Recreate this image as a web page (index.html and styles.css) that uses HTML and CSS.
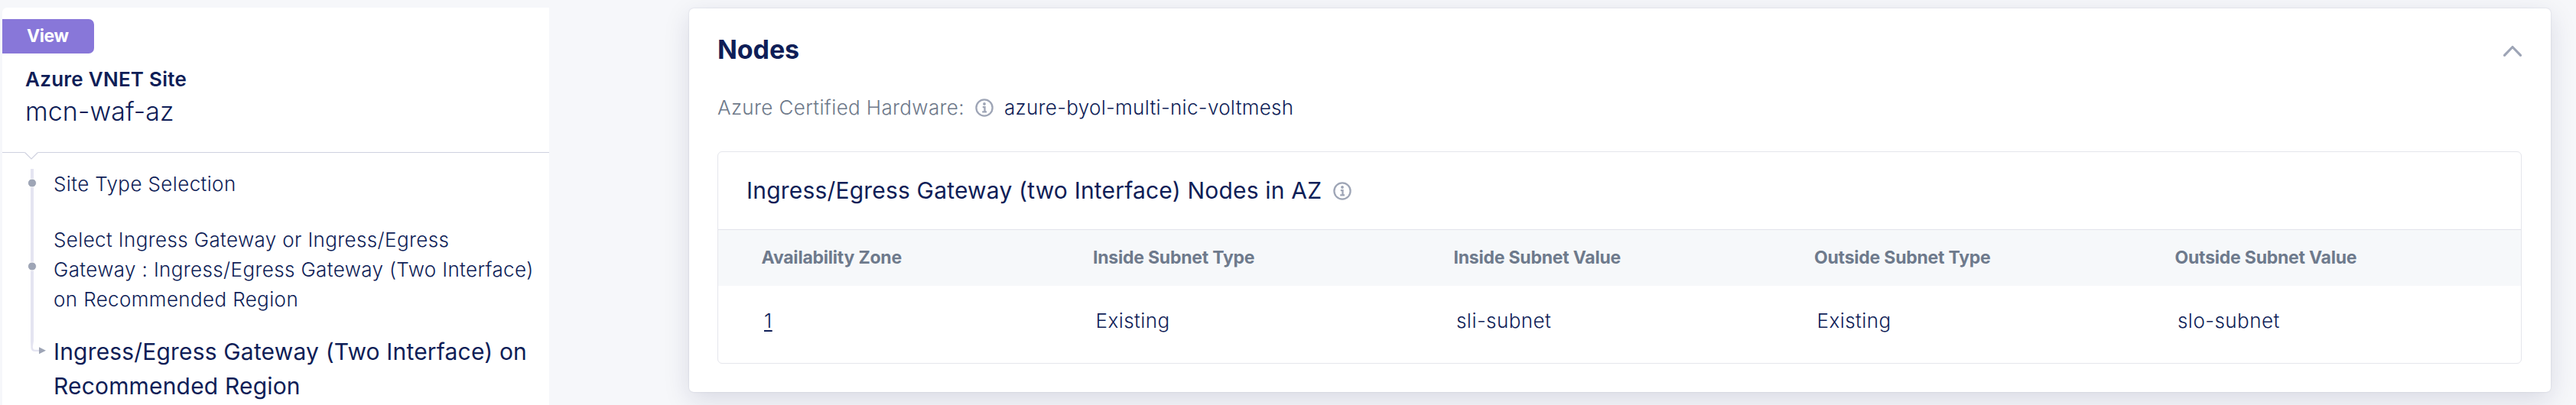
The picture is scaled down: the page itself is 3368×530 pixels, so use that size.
FILE: index.html
```html
<!DOCTYPE html>
<html lang="en">
<head>
<meta charset="utf-8">
<title>Azure VNET Site</title>
<link rel="stylesheet" href="styles.css">
</head>
<body>
<div class="page">
  <aside class="sidebar">
    <header class="site-header">
      <span class="badge">View</span>
      <div class="site-type">Azure VNET Site</div>
      <div class="site-name">mcn-waf-az</div>
      <svg class="notch" width="20" height="12" viewBox="0 0 20 12"><path d="M1 0 L10 9.5 L19 0Z" fill="#fff"/><path d="M1.5 .5 L10 9 L18.5 .5" fill="none" stroke="#cfd1df" stroke-width="1.2"/></svg>
    </header>
    <nav class="steps">
      <svg class="track" width="67" height="250" viewBox="0 0 67 250">
        <path d="M37 0 H41 V225 L39.8 233 Q40 236.6 43 236.8 H49 V239 H43 Q37.6 239 37.4 234 L37 225Z" fill="#e4e4f1"/>
        <circle cx="39" cy="18.5" r="5.5" fill="#9ea5b6" stroke="#fff"/>
        <circle cx="39" cy="127.5" r="5.5" fill="#9ea5b6" stroke="#fff"/>
        <path d="M48 233.3 L57 237.8 L48 242.3Z" fill="#9ea5b6"/>
      </svg>
      <div class="step-list">
        <a class="step">Site Type Selection</a>
        <a class="step">Select Ingress Gateway or Ingress/Egress Gateway : Ingress/Egress Gateway (Two Interface) on Recommended Region</a>
        <a class="step step-current">Ingress/Egress Gateway (Two Interface) on Recommended Region</a>
      </div>
    </nav>
  </aside>

  <main class="card">
    <div class="card-head">
      <h1 class="card-title">Nodes</h1>
      <svg class="chevron" width="26" height="16" viewBox="0 0 26 16"><path d="M2.5 13.3 L13 2.5 L23.5 13.3" fill="none" stroke="#9ea5b6" stroke-width="3.2" stroke-linecap="round" stroke-linejoin="round"/></svg>
    </div>
    <div class="field">
      <span class="field-label">Azure Certified Hardware:</span>
      <svg class="info" width="24" height="24" viewBox="0 0 24 24"><circle cx="12" cy="12" r="10.6" fill="none" stroke="#9ea5b6" stroke-width="2.3"/><circle cx="12" cy="7" r="1.9" fill="#9ea5b6"/><path d="M9.8 11.2 H12.5 V17.3 M9.2 17.3 H15" fill="none" stroke="#9ea5b6" stroke-width="2.3"/></svg>
      <span class="field-value">azure-byol-multi-nic-voltmesh</span>
    </div>
    <section class="panel">
      <div class="panel-head">
        <h2 class="panel-title">Ingress/Egress Gateway (two Interface) Nodes in AZ</h2>
        <svg class="info" width="24" height="24" viewBox="0 0 24 24"><circle cx="12" cy="12" r="10.6" fill="none" stroke="#9ea5b6" stroke-width="2.3"/><circle cx="12" cy="7" r="1.9" fill="#9ea5b6"/><path d="M9.8 11.2 H12.5 V17.3 M9.2 17.3 H15" fill="none" stroke="#9ea5b6" stroke-width="2.3"/></svg>
      </div>
      <div class="row row-head">
        <span>Availability Zone</span><span>Inside Subnet Type</span><span>Inside Subnet Value</span><span>Outside Subnet Type</span><span>Outside Subnet Value</span>
      </div>
      <div class="row row-data">
        <span><a class="link">1</a></span><span>Existing</span><span>sli-subnet</span><span>Existing</span><span>slo-subnet</span>
      </div>
    </section>
  </main>
</div>
</body>
</html>
```
FILE: styles.css
```css
* { box-sizing: border-box; }
body {
  margin: 0;
  background: #f6f7fa;
  color: #0f1e57;
  font-family: Inter, "Liberation Sans", sans-serif;
  font-size: 26px;
  font-weight: 300;
  line-height: 39px;
  letter-spacing: .37px;
}
.page {
  display: flex;
  align-items: flex-start;
  height: 530px;
  overflow: hidden;
  padding-left: 3px;
}

.sidebar {
  flex: none;
  width: 715px;
  height: 540px;
  margin-top: 10px;
  background: #fff;
  border-top-left-radius: 6px;
}
.site-header {
  position: relative;
  height: 190px;
  padding-top: 15px;
  border-bottom: 1px solid #cfd1df;
}
.badge {
  display: block;
  width: 120px;
  height: 45px;
  padding-left: 32px;
  border-radius: 0 7px 7px 0;
  background: #8877d9;
  color: #fff;
  font-size: 23px;
  font-weight: 700;
  line-height: 45px;
  letter-spacing: -.4px;
}
.site-type {
  margin-top: 14px;
  padding-left: 30px;
  font-weight: 600;
  letter-spacing: .25px;
}
.site-name {
  padding-left: 30px;
  font-size: 34px;
  line-height: 46px;
  letter-spacing: .08px;
}
.notch {
  position: absolute;
  left: 28px;
  top: 189px;
}
.steps {
  display: flex;
  padding-top: 21px;
}
.track { flex: none; }
.step-list {
  display: flex;
  flex-direction: column;
  flex: 1;
  padding-right: 19px;
}
.step { margin-bottom: 34px; }
.step + .step { margin-bottom: 27px; }
.step-current {
  font-size: 30px;
  font-weight: 400;
  line-height: 45px;
  letter-spacing: .17px;
}

.card {
  flex: none;
  width: 2434px;
  height: 502px;
  margin: 11px 0 0 183px;
  padding: 30px 37px 0 37px;
  border-radius: 6px;
  background: #fff;
  box-shadow: 0 0 2px rgba(20, 25, 80, .16), 0 10px 34px rgba(20, 25, 80, .13);
}
.card-head {
  display: flex;
  align-items: center;
  justify-content: space-between;
  height: 48px;
}
.card-title {
  margin: 0;
  font-size: 34px;
  font-weight: 700;
  line-height: 48px;
  letter-spacing: -.1px;
}
.chevron { margin-top: 4px; }
.field {
  display: flex;
  align-items: center;
  margin-top: 32px;
}
.field-label {
  width: 337px;
  color: #6e798a;
}
.info { flex: none; }
.field-value {
  margin-left: 14px;
  letter-spacing: .3px;
}
.panel {
  width: 2359px;
  height: 278px;
  margin-top: 38px;
  border: 1px solid #e5e6ec;
  border-radius: 6px;
}
.panel-head {
  display: flex;
  align-items: center;
  height: 102px;
  padding-left: 37px;
  border-bottom: 1px solid #e2e3eb;
}
.panel-title {
  margin: 0 15px 0 0;
  font-size: 30px;
  font-weight: 400;
  line-height: 45px;
  letter-spacing: .19px;
}
.row {
  display: grid;
  grid-template-columns: 433.5px 471.5px 471.5px 471.5px 1fr;
  padding-left: 56.5px;
}
.row-head {
  height: 73px;
  background: #f6f8fa;
  color: #6e7a8c;
  font-size: 23px;
  font-weight: 700;
  line-height: 73px;
  letter-spacing: -.22px;
}
.row-data {
  padding-top: 26px;
  padding-left: 60px;
  letter-spacing: .45px;
}
.link {
  text-decoration: underline;
  text-decoration-thickness: 2px;
  text-underline-offset: 3px;
}
```
